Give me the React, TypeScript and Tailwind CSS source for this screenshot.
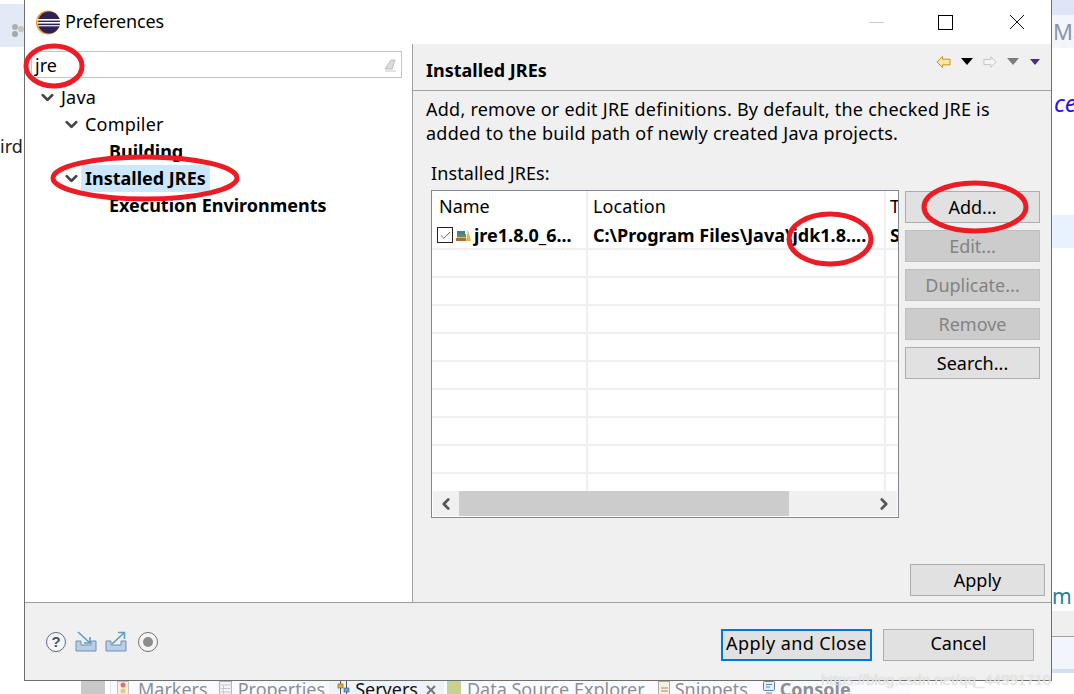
import React from 'react';
import { ChevronDown, ChevronLeft, ChevronRight, Check } from 'lucide-react';

const EclipseLogo = () => (
    <svg width="25" height="25" viewBox="0 0 25 25">
        <circle cx="12" cy="12.5" r="12" fill="#f7941e" />
        <circle cx="13" cy="12.5" r="11" fill="#2c2255" />
        <rect x="1" y="9" width="24" height="1.6" fill="#ffffff" />
        <rect x="1" y="12" width="24" height="1.6" fill="#ffffff" />
        <rect x="2" y="15" width="22" height="1.4" fill="#d9d6e8" />
    </svg>
);

const ToolButton = ({ label, disabled }: { label: string; disabled?: boolean }) => (
    <div className={`h-[32px] w-[135px] border flex items-center justify-center ${disabled ? 'bg-[#cccccc] border-[#bfbfbf] text-[#838383]' : 'bg-[#e1e1e1] border-[#adadad] text-black'}`}>
        {label}
    </div>
);

const NavIcons = () => (
    <div className="flex items-center gap-[10px]">
        <svg width="15" height="14" viewBox="0 0 16 14">
            <path d="M1 7 L7 1 V4 H15 V10 H7 V13 Z" fill="#fde79a" stroke="#c98a1b" />
        </svg>
        <svg width="12" height="7" viewBox="0 0 12 7"><path d="M0 0 H12 L6 7 Z" fill="#000000" /></svg>
        <svg width="14" height="14" viewBox="0 0 16 14">
            <path d="M15 7 L9 1 V4 H1 V10 H9 V13 Z" fill="#f5f5f5" stroke="#bdbdbd" />
        </svg>
        <svg width="12" height="7" viewBox="0 0 12 7"><path d="M0 0 H12 L6 7 Z" fill="#7c7c7c" /></svg>
        <svg width="10" height="6" viewBox="0 0 10 6" className="ml-[1px]"><path d="M0 0 H10 L5 6 Z" fill="#4b2e83" /></svg>
    </div>
);

const FooterIcons = () => (
    <div className="flex items-center gap-[8px]">
        <svg width="22" height="22" viewBox="0 0 22 22">
            <circle cx="11" cy="11" r="9.5" fill="#f6f6f8" stroke="#5d6b8a" />
            <text x="11" y="16" textAnchor="middle" fontSize="15" fontWeight="700" fill="#44506c" fontFamily="Liberation Sans, sans-serif">?</text>
        </svg>
        <svg width="22" height="22" viewBox="0 0 22 22">
            <path d="M1 10 H6 V14 H16 V10 H21 V20 H1 Z" fill="#b9cde6" stroke="#6f8fb8" />
            <path d="M3 1 L15 12 M15 6 V12 H9" fill="none" stroke="#5f9bc4" strokeWidth="1.6" />
        </svg>
        <svg width="22" height="22" viewBox="0 0 22 22">
            <path d="M1 10 H6 V14 H16 V10 H21 V20 H1 Z" fill="#b9cde6" stroke="#6f8fb8" />
            <path d="M7 13 L19 2 M13 1.5 H19.5 V8" fill="none" stroke="#5f9bc4" strokeWidth="1.6" />
        </svg>
        <svg width="22" height="22" viewBox="0 0 22 22" className="ml-[2px]">
            <circle cx="11" cy="11" r="9.5" fill="#f4f4f4" stroke="#6b7280" />
            <circle cx="11" cy="11" r="5" fill="#8c8c8c" />
        </svg>
    </div>
);

const TreeRow = ({ label, indent, bold, open, selected }: { label: string; indent: string; bold?: boolean; open?: boolean; selected?: boolean }) => (
    <div className={`h-[27px] flex items-center ${indent}`}>
        <div className="w-[20px] mr-[4px] flex justify-center">
            {open && <ChevronDown size={19} strokeWidth={3.5} className="text-[#444444]" />}
        </div>
        <div className={`h-[27px] flex items-center ${selected ? 'bg-[#cce8ff] -ml-[4px] pl-[4px] pr-[4px]' : ''} ${bold ? 'font-bold' : 'tracking-[0.2px]'}`}>{label}</div>
    </div>
);

const TableRow = ({ first }: { first?: boolean }) => (
    <div className={`flex shrink-0 border-b-2 border-[#f0f0f3] h-[28px] ${first ? 'font-bold' : ''}`}>
        <div className="w-[156px] shrink-0 border-r-2 border-[#f0f0f3] flex items-center pl-[5px] gap-[3px]">
            {first && (
                <>
                    <div className="w-[16px] h-[16px] border border-[#222222] bg-white flex items-center justify-center">
                        <Check size={13} strokeWidth={1.5} className="text-[#444444]" />
                    </div>
                    <svg width="15" height="14" viewBox="0 0 15 14">
                        <rect x="0" y="10" width="10" height="3" fill="#b5683a" />
                        <rect x="1" y="6" width="9" height="3.5" fill="#5a8f5a" />
                        <rect x="1" y="3" width="8" height="3" fill="#3f7ea6" />
                        <path d="M10 13 L12 2 L15 13 Z" fill="#e9b44c" />
                    </svg>
                    <span>jre1.8.0_6...</span>
                </>
            )}
        </div>
        <div className="w-[298px] shrink-0 border-r-2 border-[#f0f0f3] flex items-center pl-[5px] whitespace-nowrap">
            {first && 'C:\\Program Files\\Java\\jdk1.8....'}
        </div>
        <div className="flex-1 flex items-center pl-[4px] overflow-hidden">{first && 'S'}</div>
    </div>
);

export default function App() {
    return (
        <div className="relative w-[1074px] h-[694px] overflow-hidden bg-white font-['Noto_Sans',sans-serif] text-[18px] text-black">
            {/* IDE behind the dialog */}
            <div className="absolute left-0 top-[4px] w-[24px] h-[43px] bg-[#e2eaf6] flex items-center pl-[10px] pt-[8px]">
                <svg width="14" height="14" viewBox="0 0 14 14">
                    <circle cx="5" cy="4" r="3" fill="#b0b0b0" />
                    <circle cx="11" cy="6" r="3" fill="#c4c4c4" />
                    <circle cx="5" cy="11" r="3" fill="#a8a8a8" />
                </svg>
            </div>
            <div className="absolute left-0 top-[133px] text-[18px] text-[#222222]">ird</div>
            <div className="absolute right-0 top-0 w-[22px] h-[15px] bg-[#dde5f6]" />
            <div className="absolute right-0 top-[15px] w-[22px] h-[33px] bg-[#f4f5fb] text-[#8a96a8] text-[22px] leading-[33px] pl-[1px] overflow-hidden whitespace-nowrap">Ma</div>
            <div className="absolute right-0 top-[85px] w-[22px] pl-[2px] text-[#2a12e8] italic text-[24px] overflow-hidden whitespace-nowrap">ce</div>
            <div className="absolute right-0 top-[215px] w-[22px] h-[33px] bg-[#e8f2fe]" />
            <div className="absolute right-0 top-[581px] w-[22px] text-[#1f7f9f] text-[21px] overflow-hidden whitespace-nowrap">m</div>
            <div className="absolute right-0 top-[611px] w-[22px] h-[26px] bg-[#efefef] border-b border-[#a0a0a0]" />
            <div className="absolute right-0 top-[637px] w-[22px] h-[32px] bg-[#f3f5fd]" />
            <div className="absolute right-0 top-[669px] w-[22px] h-[4px] bg-[#d5def2]" />
            <div className="absolute left-[81px] top-[680px] w-[24px] h-[14px] bg-[#c8c8c8]" />
            <div className="absolute left-[110px] top-[681px] w-[800px] h-[13px] bg-[#fafbfe] border-l border-[#e2e6f0] overflow-hidden">
                <div className="flex items-start text-[18px] leading-[20px] -mt-[2px] text-[#8a8f98] whitespace-nowrap">
                    <svg width="12" height="15" viewBox="0 0 12 15" className="ml-[6px] mr-[9px] shrink-0 mt-[2px]">
                        <rect x="0.5" y="0.5" width="11" height="14" fill="#f4f0e8" stroke="#c9c3b5" />
                        <circle cx="6" cy="4" r="2.5" fill="#ee6a6a" />
                        <circle cx="6" cy="10" r="2.5" fill="#f2c96a" />
                    </svg>
                    <span>Markers</span>
                    <svg width="13" height="15" viewBox="0 0 13 15" className="ml-[11px] mr-[6px] shrink-0 mt-[2px]">
                        <rect x="0.5" y="0.5" width="12" height="14" fill="#f2f4f8" stroke="#aab2c0" />
                        <path d="M0 4 H13 M0 7.5 H13 M0 11 H13 M4.5 4 V15" stroke="#c3cad6" />
                    </svg>
                    <span>Properties</span>
                    <div className="ml-[4px] pl-[8px] pr-[8px] flex items-start bg-[#eef2fb] text-[#111111]">
                        <svg width="13" height="15" viewBox="0 0 13 15" className="mr-[5px] shrink-0 mt-[2px]">
                            <path d="M3.5 0 V15 M9.5 0 V15" stroke="#555555" />
                            <rect x="1" y="3" width="5" height="4" fill="#e3b53b" stroke="#6b5a1e" strokeWidth="0.6" />
                            <rect x="7" y="7" width="5" height="4" fill="#6ba4d6" stroke="#2e5f8a" strokeWidth="0.6" />
                        </svg>
                        <span>Servers</span>
                        <svg width="10" height="10" viewBox="0 0 10 10" className="ml-[8px] mt-[6px] shrink-0">
                            <path d="M1 1 L9 9 M9 1 L1 9" stroke="#777777" strokeWidth="2" />
                        </svg>
                    </div>
                    <svg width="14" height="15" viewBox="0 0 14 15" className="ml-[3px] mr-[6px] shrink-0 mt-[2px]">
                        <rect x="0" y="0" width="14" height="15" fill="#b9d79c" />
                        <path d="M0 5 H14 M0 10 H14 M5 0 V15 M10 0 V15" stroke="#e2c873" />
                    </svg>
                    <span>Data Source Explorer</span>
                    <svg width="12" height="15" viewBox="0 0 12 15" className="ml-[13px] mr-[5px] shrink-0 mt-[2px]">
                        <rect x="0.5" y="0.5" width="11" height="14" fill="#f6f1e2" stroke="#a9a9a9" />
                        <path d="M3 7 H10" stroke="#e26a6a" />
                        <path d="M3 10 H10" stroke="#6aa86a" />
                    </svg>
                    <span>Snippets</span>
                    <svg width="12" height="13" viewBox="0 0 12 13" className="ml-[15px] mr-[5px] shrink-0 mt-[2px]">
                        <rect x="0.5" y="0.5" width="11" height="9" rx="1" fill="#e6eefa" stroke="#5d83b5" />
                        <path d="M3 3.5 H9 M3 6 H7" stroke="#5d83b5" />
                        <path d="M3 12 H9" stroke="#5d83b5" />
                    </svg>
                    <span className="font-bold">Console</span>
                </div>
            </div>

            {/* Preferences dialog */}
            <div className="absolute left-[24px] top-0 w-[1028px] h-[681px] flex flex-col bg-white border-x border-b border-[#6e6e6e]">
                <div className="h-[44px] shrink-0 flex items-center pl-[11px]">
                    <EclipseLogo />
                    <span className="ml-[4px] pb-[2px] tracking-[-0.1px]">Preferences</span>
                    <div className="ml-auto flex items-center">
                        <div className="w-[15px] h-[1px] bg-[#cccccc] mr-[54px]" />
                        <div className="w-[15px] h-[15px] border border-black mr-[56px]" />
                        <svg width="16" height="16" viewBox="0 0 16 16" className="mr-[26px]">
                            <path d="M1 1 L15 15 M15 1 L1 15" stroke="#111111" strokeWidth="1" />
                        </svg>
                    </div>
                </div>

                <div className="flex-1 flex min-h-0">
                    {/* Filter and tree */}
                    <div className="w-[388px] shrink-0 border-r border-[#a0a0a0] pt-[7px]">
                        <div className="h-[27px] ml-[6px] w-[371px] border border-[#c4c4c4] flex items-center pl-[3px] pr-[4px]">
                            <span className="pt-[2px]">jre</span>
                            <svg width="14" height="14" viewBox="0 0 14 14" className="ml-auto">
                                <path d="M2 11 L8 2 H12 L9 11 Z" fill="#dcdcdc" stroke="#bdbdbd" />
                                <path d="M2 13 H13" stroke="#c8c8c8" />
                            </svg>
                        </div>
                        <div className="pt-[6px]">
                            <TreeRow label="Java" indent="pl-[12px]" open />
                            <TreeRow label="Compiler" indent="pl-[36px]" open />
                            <TreeRow label="Building" indent="pl-[60px]" bold />
                            <TreeRow label="Installed JREs" indent="pl-[36px]" bold open selected />
                            <TreeRow label="Execution Environments" indent="pl-[60px]" bold />
                        </div>
                    </div>

                    {/* Installed JREs page */}
                    <div className="flex-1 min-w-0 flex flex-col bg-[#f0f0f0]">
                        <div className="h-[47px] shrink-0 border-b border-[#a0a0a0] flex items-center pl-[13px] pr-[11px] pt-[7px]">
                            <span className="font-bold">Installed JREs</span>
                            <div className="ml-auto -mt-[18px]"><NavIcons /></div>
                        </div>
                        <div className="pl-[13px] pt-[6px] leading-[24px] tracking-[0.25px]">
                            <div>Add, remove or edit JRE definitions. By default, the checked JRE is</div>
                            <div>added to the build path of newly created Java projects.</div>
                        </div>
                        <div className="pl-[18px] mt-[16px] leading-[24px] tracking-[0.1px]">Installed JREs:</div>
                        <div className="flex pl-[18px] mt-[5px] gap-[6px]">
                            <div className="w-[468px] h-[328px] border border-[#828790] bg-white flex flex-col">
                                <div className="h-[31px] shrink-0 flex">
                                    <div className="w-[156px] shrink-0 border-r-2 border-[#f0f0f3] pl-[7px] flex items-center">Name</div>
                                    <div className="w-[298px] shrink-0 border-r-2 border-[#f0f0f3] pl-[5px] flex items-center tracking-[0.1px]">Location</div>
                                    <div className="flex-1 pl-[4px] flex items-center overflow-hidden">T</div>
                                </div>
                                <div className="flex-1 min-h-0 overflow-hidden flex flex-col">
                                    <TableRow first />
                                    <TableRow />
                                    <TableRow />
                                    <TableRow />
                                    <TableRow />
                                    <TableRow />
                                    <TableRow />
                                    <TableRow />
                                    <TableRow />
                                    <TableRow />
                                </div>
                                <div className="h-[25px] shrink-0 mx-[1px] mb-[1px] flex items-center bg-[#f0f0f0]">
                                    <div className="w-[26px] flex justify-center"><ChevronLeft size={18} strokeWidth={3.5} className="text-[#555555]" /></div>
                                    <div className="w-[330px] h-full bg-[#cccccc]" />
                                    <div className="flex-1 flex justify-end pr-[4px]"><ChevronRight size={18} strokeWidth={3.5} className="text-[#555555]" /></div>
                                </div>
                            </div>
                            <div className="flex flex-col gap-[7px] mt-[1px]">
                                <ToolButton label="Add..." />
                                <ToolButton label="Edit..." disabled />
                                <ToolButton label="Duplicate..." disabled />
                                <ToolButton label="Remove" disabled />
                                <ToolButton label="Search..." />
                            </div>
                        </div>
                        <div className="mt-auto mb-[6px] mr-[6px] self-end h-[32px] w-[135px] border border-[#adadad] bg-[#e1e1e1] flex items-center justify-center">Apply</div>
                    </div>
                </div>

                {/* Footer */}
                <div className="h-[78px] shrink-0 border-t border-[#a0a0a0] bg-[#f0f0f0] flex items-center pl-[20px] pr-[17px]">
                    <FooterIcons />
                    <div className="ml-auto flex gap-[11px] mt-[7px]">
                        <div className="h-[32px] w-[151px] border-2 border-[#0078d7] bg-[#e1e1e1] flex items-center justify-center pb-[3px] tracking-[0.4px]">Apply and Close</div>
                        <div className="h-[32px] w-[151px] border border-[#adadad] bg-[#e1e1e1] flex items-center justify-center pb-[3px]">Cancel</div>
                    </div>
                </div>
            </div>

            {/* Red marks drawn over the screenshot */}
            <svg className="absolute left-0 top-0 pointer-events-none" width="1074" height="694" viewBox="0 0 1074 694">
                <g fill="none" stroke="#ed1c24" strokeWidth="5">
                    <ellipse cx="54" cy="66" rx="28" ry="20" />
                    <ellipse cx="145" cy="178" rx="92" ry="21" />
                    <ellipse cx="830" cy="239" rx="41" ry="25" />
                    <ellipse cx="975" cy="207" rx="51" ry="24" />
                </g>
            </svg>

            <div className="absolute left-[821px] top-[669px] text-[15px] text-white/60 whitespace-nowrap font-['Liberation_Sans',sans-serif] [text-shadow:0_0_1px_#bbbbbb]">https://blog.csdn.net/qq_44991710</div>
        </div>
    );
}
